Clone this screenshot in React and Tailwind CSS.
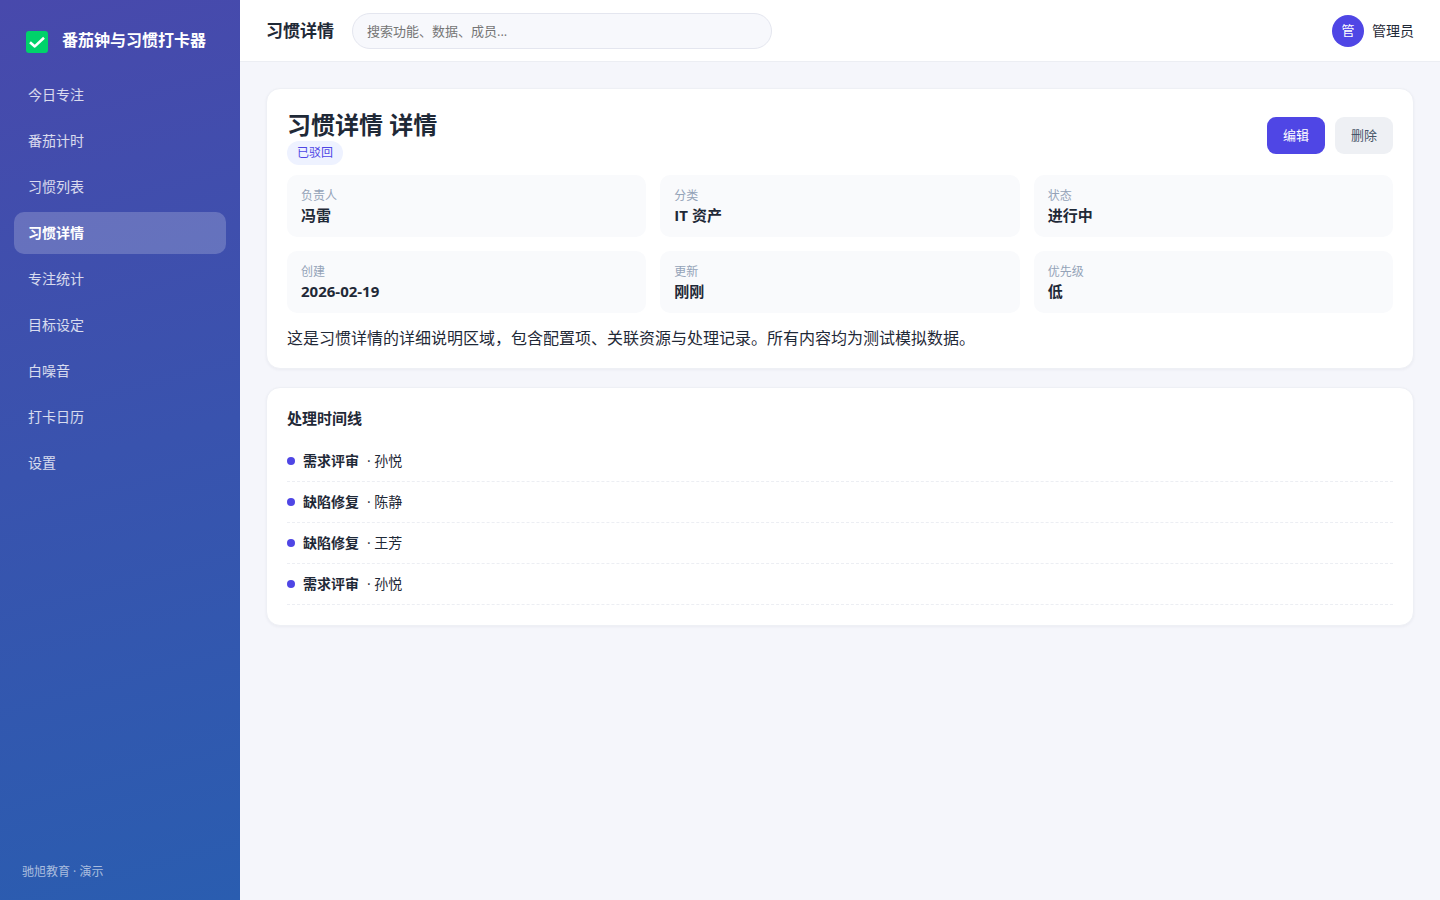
import { useState } from 'react'

const navItems = [
  '今日专注',
  '番茄计时',
  '习惯列表',
  '习惯详情',
  '专注统计',
  '目标设定',
  '白噪音',
  '打卡日历',
  '设置',
]

const fields = [
  { label: '负责人', value: '冯雷' },
  { label: '分类', value: 'IT 资产' },
  { label: '状态', value: '进行中' },
  { label: '创建', value: '2026-02-19' },
  { label: '更新', value: '刚刚' },
  { label: '优先级', value: '低' },
]

const timeline = [
  { id: 1, title: '需求评审', user: '孙悦' },
  { id: 2, title: '缺陷修复', user: '陈静' },
  { id: 3, title: '缺陷修复', user: '王芳' },
  { id: 4, title: '需求评审', user: '孙悦' },
]

function Logo() {
  return (
    <svg className="w-[22px] h-[22px] shrink-0" viewBox="0 0 22 22" fill="none" aria-hidden="true">
      <rect width="22" height="22" rx="3" fill="#00d26a" />
      <path d="M4 11.2 8.8 15.4 18 6.8" stroke="#fff" strokeWidth="2.6" strokeLinejoin="round" />
    </svg>
  )
}

function Sidebar({ active, onSelect }) {
  return (
    <aside className="w-60 shrink-0 flex flex-col px-3.5 pb-[18px] text-white bg-[linear-gradient(165deg,#4849ac_0%,#2a5db0_100%)]">
      <div className="flex items-center gap-3.5 h-[74px] pl-3 pt-2.5">
        <Logo />
        <span className="text-base leading-6 font-bold whitespace-nowrap pb-1">番茄钟与习惯打卡器</span>
      </div>
      <nav className="flex flex-col gap-1">
        {navItems.map((item) => (
          <a
            key={item}
            href="#"
            onClick={(e) => {
              e.preventDefault()
              onSelect(item)
            }}
            className={
              item === active
                ? 'h-[42px] flex items-center px-3.5 rounded-[10px] text-sm font-bold text-white bg-white/20'
                : 'h-[42px] flex items-center px-3.5 rounded-[10px] text-sm text-white/80 hover:bg-white/10'
            }
          >
            {item}
          </a>
        ))}
      </nav>
      <p className="mt-auto px-2 text-xs leading-5 text-white/60">驰旭教育 · 演示</p>
    </aside>
  )
}

function Header() {
  const [keyword, setKeyword] = useState('')

  return (
    <header className="h-[62px] flex items-center gap-[18px] px-[26px] bg-white border-b border-[#eceef3]">
      <h1 className="text-[17px] leading-6 font-bold whitespace-nowrap">习惯详情</h1>
      <input
        type="search"
        aria-label="搜索"
        placeholder="搜索功能、数据、成员..."
        value={keyword}
        onChange={(e) => setKeyword(e.target.value)}
        className="w-full max-w-[420px] h-9 px-3.5 text-[13px] rounded-full border border-[#e4e6ef] bg-[#f7f8fc] placeholder:text-[#757575] focus:outline-none focus:border-[#4f46e5]"
      />
      <div className="ml-auto flex items-center gap-2 shrink-0">
        <span className="w-8 h-8 rounded-full bg-[#4f46e5] text-white text-[13px] flex items-center justify-center">管</span>
        <span className="text-sm">管理员</span>
      </div>
    </header>
  )
}

export default function App() {
  const [active, setActive] = useState('习惯详情')

  return (
    <div className="flex min-h-screen bg-[#f5f6fb] text-[#1f2937] font-['Open_Sans','Noto_Sans_CJK_SC',sans-serif]">
      <Sidebar active={active} onSelect={setActive} />
      <div className="flex-1 min-w-0">
        <Header />
        <main className="p-[26px] flex flex-col gap-[18px]">
          <section className="bg-white border border-[#eef0f5] rounded-[14px] p-5 shadow-[0_1px_3px_rgba(30,41,80,0.05)]">
            <div className="flex items-start justify-between">
              <div>
                <h2 className="text-2xl leading-8 font-bold">习惯详情 详情</h2>
                <span className="block w-fit px-2.5 text-xs leading-6 rounded-full bg-[#eef2ff] text-[#4f46e5]">已驳回</span>
              </div>
              <div className="flex gap-2.5 mt-2">
                <button type="button" className="h-[37px] px-4 rounded-[9px] text-[13px] bg-[#4f46e5] text-white hover:bg-[#4338ca]">
                  编辑
                </button>
                <button type="button" className="h-[37px] px-4 rounded-[9px] text-[13px] bg-[#eef0f4] text-[#475569] hover:bg-[#e2e5ec]">
                  删除
                </button>
              </div>
            </div>
            <dl className="grid grid-cols-3 gap-3.5 mt-2.5">
              {fields.map((field) => (
                <div key={field.label} className="bg-[#f9fafc] rounded-[10px] px-3.5 py-3">
                  <dt className="text-xs leading-[18px] text-[#94a3b8]">{field.label}</dt>
                  <dd className="text-[15px] leading-5 font-bold">{field.value}</dd>
                </div>
              ))}
            </dl>
            <p className="mt-[15px] text-base leading-5">
              这是习惯详情的详细说明区域，包含配置项、关联资源与处理记录。所有内容均为测试模拟数据。
            </p>
          </section>

          <section className="bg-white border border-[#eef0f5] rounded-[14px] p-5 shadow-[0_1px_3px_rgba(30,41,80,0.05)]">
            <h3 className="text-[15px] leading-5 font-bold mb-[13px]">处理时间线</h3>
            <ul>
              {timeline.map((item) => (
                <li key={item.id} className="flex items-center gap-2 py-2.5 text-sm leading-5 border-b border-dashed border-[#eceef3]">
                  <span className="w-2 h-2 rounded-full bg-[#4f46e5]" />
                  <b>{item.title}</b>
                  <span>· {item.user}</span>
                </li>
              ))}
            </ul>
          </section>
        </main>
      </div>
    </div>
  )
}
